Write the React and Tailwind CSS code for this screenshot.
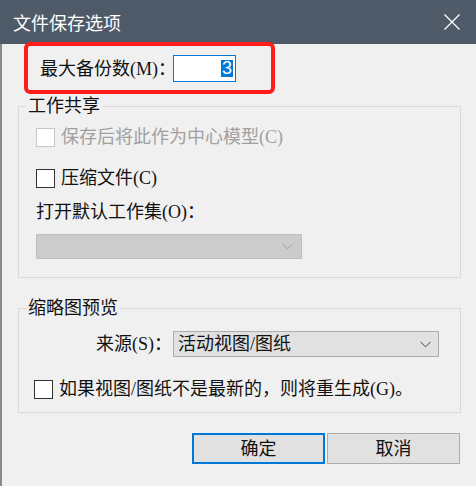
import React from "react";

const body = "font-[family-name:Liberation_Serif,Noto_Sans_CJK_SC,serif] text-[18px] leading-[20px] text-[#111]";

const Chevron = ({ color }) => (
  <svg width="11" height="7" viewBox="0 0 11 7" fill="none">
    <polyline points="0.5,0.8 5.5,5.8 10.5,0.8" stroke={color} strokeWidth="1" />
  </svg>
);

const Check = ({ disabled, label, className = "" }) => (
  <div className={`flex items-center gap-[6px] h-[20px] ${className}`}>
    <div
      className={`w-[19px] h-[19px] shrink-0 bg-white border ${
        disabled ? "border-[#c6c6c6]" : "border-[#333333]"
      }`}
    />
    <span className={`whitespace-nowrap ${disabled ? "text-[#a0a0a0]" : ""}`}>{label}</span>
  </div>
);

export default function App() {
  return (
    <div className={`w-[476px] h-[486px] bg-[#f0f0f0] flex flex-col overflow-hidden ${body}`}>
      {/* title bar */}
      <div className="h-[44px] shrink-0 bg-[#4f5a69] flex items-center justify-between pl-[13px] pr-[16px]">
        <span className="text-white font-[family-name:Noto_Sans_CJK_SC,sans-serif] text-[18px]">
          文件保存选项
        </span>
        <svg width="16" height="16" viewBox="0 0 16 16">
          <path d="M0.5 0.5 L15.5 15.5 M15.5 0.5 L0.5 15.5" stroke="#fff" strokeWidth="1.3" />
        </svg>
      </div>

      <div className="flex-1 flex flex-col border-l-2 border-[#8a8a8a]">
        {/* backups, highlighted */}
        <div className="relative -mt-[2px] ml-[22px] w-[251px] h-[52px] border-4 border-[#ff1c1c] rounded-[6px] flex items-center pl-[12px]">
          <span className="w-[133px] shrink-0 whitespace-nowrap pt-[2px]">最大备份数(M)：</span>
          <div className="w-[63px] h-[27px] shrink-0 bg-white border border-[#0078d7] flex items-center justify-end pr-[2px]">
            <span className="bg-[#0078d7] text-white font-[family-name:Liberation_Sans,sans-serif] text-[18px] leading-[17px] px-[1px]">
              3
            </span>
          </div>
        </div>

        {/* worksharing */}
        <fieldset className="mt-[2px] ml-[16px] w-[443px] border border-[#d9d9d9] pl-[7px] pb-[18px]">
          <legend className="px-[2px] leading-[20px]">工作共享</legend>
          <Check disabled label="保存后将此作为中心模型(C)" className="ml-[10px] mt-[11px]" />
          <Check label="压缩文件(C)" className="ml-[10px] mt-[21px]" />
          <div className="ml-[10px] mt-[14px] whitespace-nowrap">打开默认工作集(O)：</div>
          <div className="ml-[10px] mt-[12px] w-[266px] h-[25px] bg-[#cccccc] border border-[#bfbfbf] flex items-center justify-end pr-[8px]">
            <Chevron color="#a3a3a3" />
          </div>
        </fieldset>

        {/* thumbnail preview */}
        <fieldset className="mt-[20px] ml-[16px] w-[443px] border border-[#d9d9d9] pl-[7px] pb-[13px]">
          <legend className="px-[2px] leading-[20px]">缩略图预览</legend>
          <div className="mt-[13px] flex items-center">
            <span className="w-[147px] shrink-0 whitespace-nowrap text-right pr-[1px]">来源(S)：</span>
            <div className="w-[266px] h-[26px] bg-[#e1e1e1] border border-[#adadad] flex items-center justify-between pl-[4px] pr-[7px]">
              <span>活动视图/图纸</span>
              <Chevron color="#444" />
            </div>
          </div>
          <Check label="如果视图/图纸不是最新的，则将重生成(G)。" className="ml-[8px] mt-[22px]" />
        </fieldset>

        {/* buttons */}
        <div className="mt-[20px] flex justify-end gap-[2px] pr-[16px]">
          <button className="w-[133px] h-[31px] bg-[#e1e1e1] border-2 border-[#0078d7]">确定</button>
          <button className="w-[133px] h-[31px] bg-[#e1e1e1] border border-[#adadad]">取消</button>
        </div>
      </div>
    </div>
  );
}
